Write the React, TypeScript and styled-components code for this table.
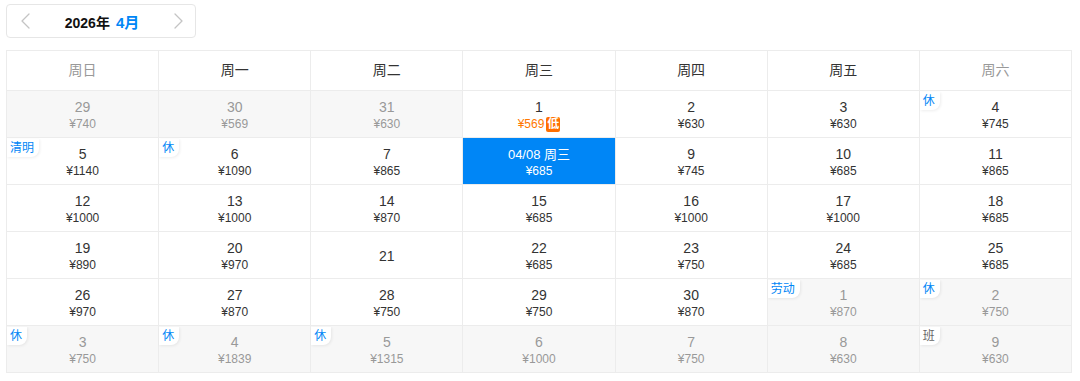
import React from "react";
import styled, { createGlobalStyle } from "styled-components";

const Global = createGlobalStyle`
  html, body { margin: 0; padding: 0; background: #fff; }
  body { font-family: "Liberation Sans", "Noto Sans CJK SC", sans-serif; color: #333; }
`;

const Page = styled.div`
  padding: 4px 8px 0 6px;
  width: 1080px;
  box-sizing: border-box;
`;

const MonthBar = styled.div`
  width: 190px;
  height: 34px;
  box-sizing: border-box;
  border: 1px solid #e6e6e6;
  border-radius: 4px;
  display: flex;
  align-items: center;
  justify-content: space-between;
  padding: 0 12px 0 14px;
  margin-bottom: 12px;
`;

const Arrow = styled.span`
  display: flex;
  align-items: center;
  color: #c4c4c4;
`;

const MonthTitle = styled.div`
  font-size: 14px;
  font-weight: bold;
  color: #111;
  display: flex;
  align-items: baseline;
  gap: 6px;
`;

const MonthNum = styled.span`
  color: #0086f6;
  font-size: 15px;
`;

const Grid = styled.div`
  display: grid;
  grid-template-columns: repeat(7, 1fr);
  width: 1066px;
  border-top: 1px solid #ececec;
  border-left: 1px solid #ececec;
  box-sizing: border-box;
`;

const HeadCell = styled.div<{ $weekend?: boolean }>`
  height: 40px;
  box-sizing: border-box;
  border-right: 1px solid #ececec;
  border-bottom: 1px solid #ececec;
  display: flex;
  align-items: center;
  justify-content: center;
  padding-bottom: 3px;
  font-size: 14px;
  color: ${(p) => (p.$weekend ? "#999" : "#333")};
`;

const DayCell = styled.div<{ $muted?: boolean; $selected?: boolean }>`
  position: relative;
  height: 47px;
  box-sizing: border-box;
  border-right: 1px solid #ececec;
  border-bottom: 1px solid #ececec;
  display: flex;
  flex-direction: column;
  align-items: center;
  justify-content: center;
  padding-top: 3px;
  background: ${(p) => (p.$selected ? "#0086f6" : p.$muted ? "#f7f7f7" : "#fff")};
  color: ${(p) => (p.$selected ? "#fff" : p.$muted ? "#999" : "#333")};
`;

const DayNum = styled.div<{ $small?: boolean }>`
  font-size: ${(p) => (p.$small ? "13px" : "14px")};
  line-height: 17px;
`;

const Price = styled.div<{ $low?: boolean }>`
  font-size: 12px;
  line-height: 16px;
  display: flex;
  align-items: center;
  gap: 2px;
  color: ${(p) => (p.$low ? "#ff7700" : "inherit")};
`;

const LowBadge = styled.span`
  background: #ff6f00;
  color: #fff;
  font-size: 12px;
  font-weight: bold;
  line-height: 15px;
  padding: 0 1px;
  border-radius: 2px;
`;

const Tag = styled.span<{ $gray?: boolean }>`
  position: absolute;
  top: 1px;
  left: 0;
  background: #fff;
  color: ${(p) => (p.$gray ? "#666" : "#0086f6")};
  font-size: 12px;
  line-height: 16px;
  padding: 1px 5px 1px 3px;
  border-radius: 0 0 8px 0;
  box-shadow: 1px 1px 3px rgba(0, 0, 0, 0.07);
`;

type Day = {
  d: string;
  p?: string;
  muted?: boolean;
  selected?: boolean;
  low?: boolean;
  tag?: string;
  tagGray?: boolean;
};

const weekdays = ["周日", "周一", "周二", "周三", "周四", "周五", "周六"];

const days: Day[] = [
  { d: "29", p: "¥740", muted: true },
  { d: "30", p: "¥569", muted: true },
  { d: "31", p: "¥630", muted: true },
  { d: "1", p: "¥569", low: true },
  { d: "2", p: "¥630" },
  { d: "3", p: "¥630" },
  { d: "4", p: "¥745", tag: "休" },
  { d: "5", p: "¥1140", tag: "清明" },
  { d: "6", p: "¥1090", tag: "休" },
  { d: "7", p: "¥865" },
  { d: "04/08 周三", p: "¥685", selected: true },
  { d: "9", p: "¥745" },
  { d: "10", p: "¥685" },
  { d: "11", p: "¥865" },
  { d: "12", p: "¥1000" },
  { d: "13", p: "¥1000" },
  { d: "14", p: "¥870" },
  { d: "15", p: "¥685" },
  { d: "16", p: "¥1000" },
  { d: "17", p: "¥1000" },
  { d: "18", p: "¥685" },
  { d: "19", p: "¥890" },
  { d: "20", p: "¥970" },
  { d: "21" },
  { d: "22", p: "¥685" },
  { d: "23", p: "¥750" },
  { d: "24", p: "¥685" },
  { d: "25", p: "¥685" },
  { d: "26", p: "¥970" },
  { d: "27", p: "¥870" },
  { d: "28", p: "¥750" },
  { d: "29", p: "¥750" },
  { d: "30", p: "¥870" },
  { d: "1", p: "¥870", muted: true, tag: "劳动" },
  { d: "2", p: "¥750", muted: true, tag: "休" },
  { d: "3", p: "¥750", muted: true, tag: "休" },
  { d: "4", p: "¥1839", muted: true, tag: "休" },
  { d: "5", p: "¥1315", muted: true, tag: "休" },
  { d: "6", p: "¥1000", muted: true },
  { d: "7", p: "¥750", muted: true },
  { d: "8", p: "¥630", muted: true },
  { d: "9", p: "¥630", muted: true, tag: "班", tagGray: true },
];

const Chevron = ({ dir }: { dir: "left" | "right" }) => (
  <svg width="9" height="16" viewBox="0 0 9 16" fill="none">
    <path
      d={dir === "left" ? "M8 1L1 8l7 7" : "M1 1l7 7-7 7"}
      stroke="currentColor"
      strokeWidth="1.3"
      strokeLinecap="round"
      strokeLinejoin="round"
    />
  </svg>
);

export default function App() {
  return (
    <>
      <Global />
      <Page>
        <MonthBar>
          <Arrow>
            <Chevron dir="left" />
          </Arrow>
          <MonthTitle>
            <span>2026年</span>
            <MonthNum>4月</MonthNum>
          </MonthTitle>
          <Arrow>
            <Chevron dir="right" />
          </Arrow>
        </MonthBar>
        <Grid>
          {weekdays.map((w, i) => (
            <HeadCell key={w} $weekend={i === 0 || i === 6}>
              {w}
            </HeadCell>
          ))}
          {days.map((day, i) => (
            <DayCell key={i} $muted={day.muted} $selected={day.selected}>
              {day.tag && <Tag $gray={day.tagGray}>{day.tag}</Tag>}
              <DayNum $small={day.selected}>{day.d}</DayNum>
              {day.p && (
                <Price $low={day.low}>
                  {day.p}
                  {day.low && <LowBadge>低</LowBadge>}
                </Price>
              )}
            </DayCell>
          ))}
        </Grid>
      </Page>
    </>
  );
}
